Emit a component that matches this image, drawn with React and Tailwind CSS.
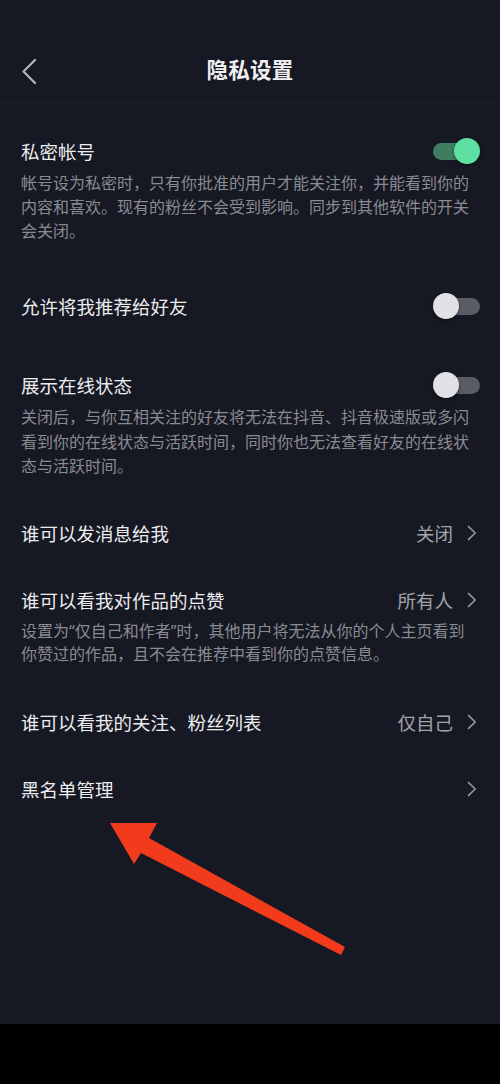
const rows = [
  {
    id: "private",
    mt: "mt-[35px]",
    title: "私密帐号",
    toggle: true,
    on: true,
    desc: "帐号设为私密时，只有你批准的用户才能关注你，并能看到你的内容和喜欢。现有的粉丝不会受到影响。同步到其他软件的开关会关闭。",
    leading: "leading-[24px]",
  },
  { id: "recommend", mt: "mt-[50px]", title: "允许将我推荐给好友", toggle: true, on: false },
  {
    id: "online",
    mt: "mt-[53px]",
    title: "展示在线状态",
    toggle: true,
    on: false,
    desc: "关闭后，与你互相关注的好友将无法在抖音、抖音极速版或多闪看到你的在线状态与活跃时间，同时你也无法查看好友的在线状态与活跃时间。",
    leading: "leading-[24.5px]",
  },
  { id: "message", mt: "mt-[41px]", title: "谁可以发消息给我", value: "关闭" },
  {
    id: "likes",
    mt: "mt-[41px]",
    title: "谁可以看我对作品的点赞",
    value: "所有人",
    desc: "设置为“仅自己和作者”时，其他用户将无法从你的个人主页看到你赞过的作品，且不会在推荐中看到你的点赞信息。",
    leading: "leading-[23.5px]",
  },
  { id: "follow", mt: "mt-[42px]", title: "谁可以看我的关注、粉丝列表", value: "仅自己" },
  { id: "block", mt: "mt-[41px]", title: "黑名单管理", value: "" },
]

function Toggle({ on }) {
  return (
    <div className="relative w-[47px] h-[26px] shrink-0">
      <div
        className={`absolute top-[4.5px] h-[17px] w-[44px] rounded-full ${
          on ? "left-0 bg-[#3f7d5e]" : "right-0 bg-[#5a5c65]"
        }`}
      />
      <div
        className={`absolute top-0 w-[26px] h-[26px] rounded-full shadow-[0_1px_3px_rgba(0,0,0,0.5)] ${
          on ? "right-0 bg-[#5fe0a3]" : "left-0 bg-[#e1e1e5]"
        }`}
      />
    </div>
  )
}

function Chevron() {
  return (
    <svg width="10" height="16" viewBox="0 0 10 16" className="ml-[14px] shrink-0">
      <path d="M1.5 1.5 L8.2 8 L1.5 14.5" fill="none" stroke="#9a9ba1" strokeWidth="1.7" strokeLinecap="round" strokeLinejoin="round" />
    </svg>
  )
}

function Row({ row }) {
  return (
    <div className={`${row.mt} pl-[21px] pr-[20px]`}>
      <div className="flex items-center justify-between h-[26px]">
        <span className="text-[18.5px] leading-[26px] text-[#ececee]">{row.title}</span>
        {row.toggle ? (
          <Toggle on={row.on} />
        ) : (
          <div className="flex items-center mr-[3px]">
            <span className="text-[18.5px] leading-[26px] text-[#a3a4aa]">{row.value}</span>
            <Chevron />
          </div>
        )}
      </div>
      {row.desc && (
        <p className={`mt-[7px] text-[16px] ${row.leading} text-[#8a8b91] font-['Noto_Sans','Noto_Sans_CJK_SC',sans-serif]`}>
          {row.desc}
        </p>
      )}
    </div>
  )
}

export default function App() {
  return (
    <div className="relative w-[500px] h-[1084px] flex flex-col font-['Noto_Sans_CJK_SC',sans-serif] overflow-hidden">
      <div className="flex-1 bg-[#161823] flex flex-col">
        {/* status bar space */}
        <div className="h-[37px]" />

        {/* Nav */}
        <div className="relative h-[66px] flex items-center justify-center border-b border-[#1e2029]">
          <svg className="absolute left-[21px] top-[21px]" width="16" height="28" viewBox="0 0 16 28">
            <path d="M14 2 L2.5 13.5 L14 25" fill="none" stroke="#b6b6bb" strokeWidth="2.2" strokeLinecap="round" strokeLinejoin="round" />
          </svg>
          <h1 className="text-[21.5px] font-bold text-[#f0f0f2] tracking-[0.3px]">隐私设置</h1>
        </div>

        {rows.map(row => (
          <Row key={row.id} row={row} />
        ))}
      </div>
      <div className="h-[60px] bg-black" />

      {/* annotation arrow */}
      <svg
        className="absolute top-0 left-0 pointer-events-none"
        width="500"
        height="1084"
        viewBox="0 0 500 1084"
      >
        <polygon
          points="110,823 157,823 149,838 345,947 341,955 141,853 134,864"
          fill="#f23b1c"
        />
      </svg>
    </div>
  )
}
